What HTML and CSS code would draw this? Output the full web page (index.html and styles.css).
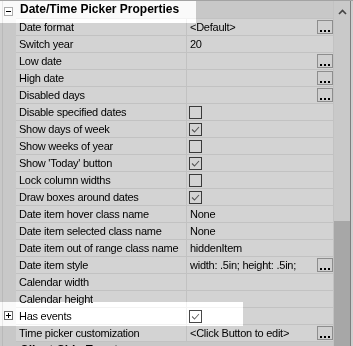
FILE: index.html
```html
<!DOCTYPE html>
<html>
<head>
<meta charset="utf-8">
<link rel="stylesheet" href="styles.css">
</head>
<body>
<div class="pg">
  <div class="grid">
    <div class="cat">
      <div class="g"><span class="exp minus"></span></div>
      <div class="ct">Date/Time Picker Properties</div>
    </div>
    <div class="row"><div class="g"></div><div class="n">Date format</div><div class="v"><span>&lt;Default&gt;</span><span class="btn"><i></i><i></i><i></i></span></div></div>
    <div class="row"><div class="g"></div><div class="n">Switch year</div><div class="v"><span>20</span></div></div>
    <div class="row"><div class="g"></div><div class="n">Low date</div><div class="v"><span class="btn"><i></i><i></i><i></i></span></div></div>
    <div class="row"><div class="g"></div><div class="n">High date</div><div class="v"><span class="btn"><i></i><i></i><i></i></span></div></div>
    <div class="row"><div class="g"></div><div class="n">Disabled days</div><div class="v"><span class="btn"><i></i><i></i><i></i></span></div></div>
    <div class="row"><div class="g"></div><div class="n">Disable specified dates</div><div class="v"><span class="cb"></span></div></div>
    <div class="row"><div class="g"></div><div class="n">Show days of week</div><div class="v"><span class="cb"><svg width="11" height="11" viewBox="0 0 11 11"><polyline points="2,5.5 4.5,8 9,3" fill="none" stroke="#555" stroke-width="1.1"/></svg></span></div></div>
    <div class="row"><div class="g"></div><div class="n">Show weeks of year</div><div class="v"><span class="cb"></span></div></div>
    <div class="row"><div class="g"></div><div class="n">Show 'Today' button</div><div class="v"><span class="cb"><svg width="11" height="11" viewBox="0 0 11 11"><polyline points="2,5.5 4.5,8 9,3" fill="none" stroke="#555" stroke-width="1.1"/></svg></span></div></div>
    <div class="row"><div class="g"></div><div class="n">Lock column widths</div><div class="v"><span class="cb"></span></div></div>
    <div class="row"><div class="g"></div><div class="n">Draw boxes around dates</div><div class="v"><span class="cb"><svg width="11" height="11" viewBox="0 0 11 11"><polyline points="2,5.5 4.5,8 9,3" fill="none" stroke="#555" stroke-width="1.1"/></svg></span></div></div>
    <div class="row"><div class="g"></div><div class="n">Date item hover class name</div><div class="v"><span>None</span></div></div>
    <div class="row"><div class="g"></div><div class="n">Date item selected class name</div><div class="v"><span>None</span></div></div>
    <div class="row"><div class="g"></div><div class="n">Date item out of range class name</div><div class="v"><span>hiddenItem</span></div></div>
    <div class="row"><div class="g"></div><div class="n">Date item style</div><div class="v"><span>width: .5in; height: .5in;</span><span class="btn"><i></i><i></i><i></i></span></div></div>
    <div class="row"><div class="g"></div><div class="n">Calendar width</div><div class="v"></div></div>
    <div class="row"><div class="g"></div><div class="n">Calendar height</div><div class="v"></div></div>
    <div class="row"><div class="g"><span class="exp plus"></span></div><div class="n">Has events</div><div class="v"><span class="cb"><svg width="11" height="11" viewBox="0 0 11 11"><polyline points="2,5.5 4.5,8 9,3" fill="none" stroke="#555" stroke-width="1.1"/></svg></span></div></div>
    <div class="row"><div class="g"></div><div class="n">Time picker customization</div><div class="v"><span>&lt;Click Button to edit&gt;</span><span class="btn"><i></i><i></i><i></i></span></div></div>
    <div class="cat">
      <div class="g"><span class="exp minus"></span></div>
      <div class="ct">Client Side Events</div>
    </div>
  </div>
  <div class="sb">
    <div class="arrow"><svg width="9" height="6" viewBox="0 0 9 6"><polyline points="1,5 4.5,1.5 8,5" fill="none" stroke="#444" stroke-width="1.6"/></svg></div>
    <div class="track"></div>
    <div class="thumb"></div>
  </div>
  <div class="edge"></div>
  <div class="hl hl1"></div>
  <div class="hl hl2"></div>
</div>
</body>
</html>
```
FILE: styles.css
```css
html, body {
  margin: 0;
  padding: 0;
}
body {
  width: 353px;
  height: 346px;
  overflow: hidden;
  background: #c8c8c8;
  font-family: "Liberation Sans", Arial, sans-serif;
  font-size: 11px;
  color: #000;
}
.pg {
  position: relative;
  display: flex;
  height: 345px;
  border-top: 1px solid #a3a3a3;
  background: #c8c8c8;
  isolation: isolate;
  overflow: hidden;
}
.grid {
  width: 334px;
  display: flex;
  flex-direction: column;
}
.g {
  width: 16px;
  flex: none;
  background: linear-gradient(to right, transparent 2px, #b9b9b9 2px, #b9b9b9 3px, transparent 3px), #c8c8c8;
  position: relative;
}
.cat {
  display: flex;
  height: 18px;
  flex: none;
}
.cat .ct {
  flex: 1;
  font-weight: bold;
  font-size: 12px;
  line-height: 17px;
  padding-left: 4px;
  border-bottom: 1px solid #c2c2c2;
  border-right: 1px solid #c2c2c2;
  background: #c8c8c8;
}
.exp {
  position: absolute;
  left: 4px;
  top: 6px;
  width: 7px;
  height: 7px;
  border: 1px solid #8a8a8a;
  background: #d0d0d0;
}
.exp::before {
  content: "";
  position: absolute;
  left: 1px;
  top: 3px;
  width: 5px;
  height: 1px;
  background: #000;
}
.exp.plus {
  top: 3px;
  border-color: #555;
}
.exp.plus::after {
  content: "";
  position: absolute;
  left: 3px;
  top: 1px;
  width: 1px;
  height: 5px;
  background: #000;
}
.row {
  display: flex;
  height: 17px;
  flex: none;
  letter-spacing: -0.25px;
}
.n {
  width: 167px;
  padding-left: 3px;
  line-height: 16px;
  white-space: nowrap;
  overflow: hidden;
  background: #d3d3d3;
  border-right: 1px solid #c2c2c2;
  border-bottom: 1px solid #c2c2c2;
}
.v {
  width: 143px;
  padding-left: 3px;
  line-height: 16px;
  white-space: nowrap;
  display: flex;
  align-items: flex-start;
  background: #d3d3d3;
  border-right: 1px solid #c2c2c2;
  border-bottom: 1px solid #c2c2c2;
}
.btn {
  margin-left: auto;
  margin-top: 1px;
  width: 14px;
  height: 12px;
  border: 1px solid #8d8d8d;
  background: #d0d0d0;
  position: relative;
  flex: none;
}
.btn i {
  position: absolute;
  top: 9px;
  width: 2px;
  height: 2px;
  background: #000;
}
.btn i:nth-child(1) { left: 2px; }
.btn i:nth-child(2) { left: 6px; }
.btn i:nth-child(3) { left: 10px; }
.cb {
  margin-left: -1px;
  margin-top: 2px;
  width: 11px;
  height: 11px;
  border: 1px solid #3a3a3a;
  display: block;
  flex: none;
}
.cb svg {
  display: block;
}
.sb {
  width: 16px;
  display: flex;
  flex-direction: column;
  background: #c9c9c9;
  border-right: 1px solid #7e7e7e;
}
.arrow {
  height: 17px;
  display: flex;
  justify-content: center;
  padding-top: 8px;
  box-sizing: border-box;
  flex: none;
}
.arrow svg {
  display: block;
}
.track {
  flex: 1;
}
.thumb {
  height: 125px;
  background: #a7a7a7;
  flex: none;
}
.edge {
  width: 2px;
  background: #d0d0d0;
}
.hl {
  position: absolute;
  background: #333;
  mix-blend-mode: color-dodge;
}
.hl1 {
  left: 0;
  top: -1px;
  width: 196px;
  height: 23px;
}
.hl2 {
  left: 0;
  top: 301px;
  width: 243px;
  height: 24px;
}
```
